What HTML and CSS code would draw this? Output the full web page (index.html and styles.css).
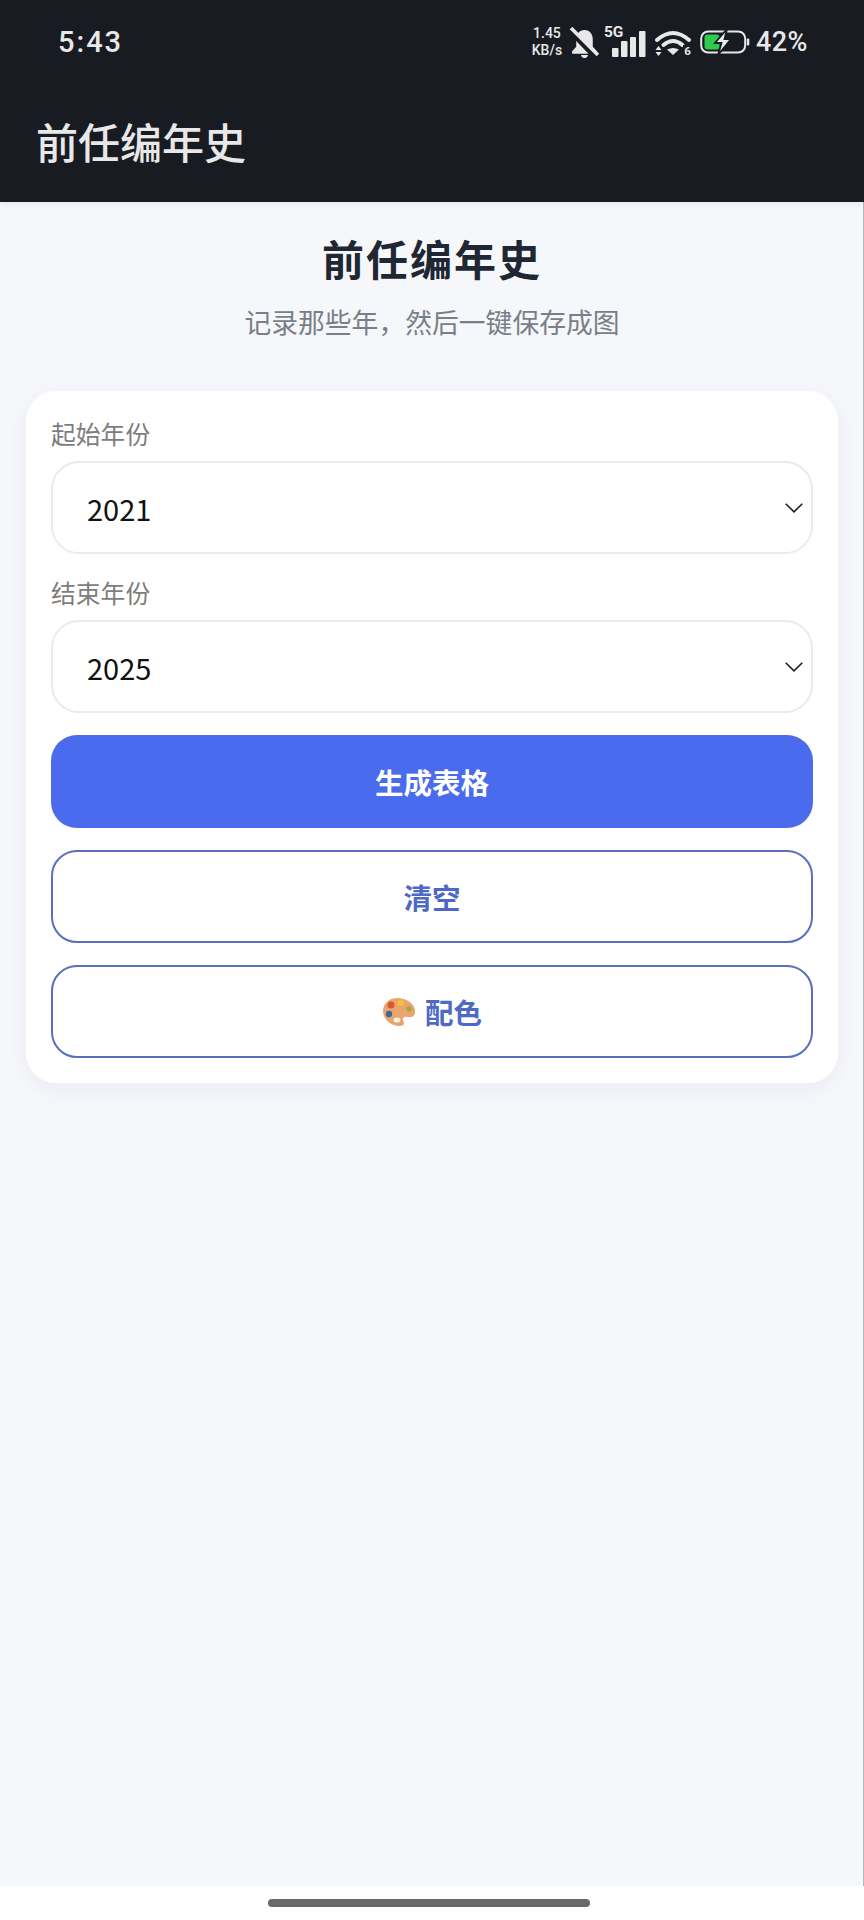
FILE: index.html
```html
<!DOCTYPE html>
<html lang="zh-CN">
<head>
<meta charset="utf-8">
<title>前任编年史</title>
<link rel="stylesheet" href="styles.css">
</head>
<body>
<div class="page">
  <header class="app-header">
    <div class="status-bar">
      <span class="time">5:43</span>
      <div class="status-icons">
        <div class="speed"><span>1.45</span><span>KB/s</span></div>
        <svg class="ic-bell" viewBox="0 0 28 30" width="29" height="31">
          <path d="M14 3C9 3 6 7 6 12V19L2 23.500V26H26V23.500L22 19V12C22 7 19 3 14 3Z" fill="#e8e8e8"/>
          <path d="M10.500 27H17.500C17 29 15.500 30 14 30S11 29 10.500 27Z" fill="#e8e8e8"/>
          <path d="M0 3L25 29" stroke="#181b22" stroke-width="6"/>
          <path d="M1 1L27 27" stroke="#e8e8e8" stroke-width="3.400"/>
        </svg>
        <div class="net">
          <span class="five-g">5G</span>
          <svg viewBox="0 0 34 26" width="34" height="26">
            <rect x="0" y="17" width="6.500" height="9" rx="1" fill="#e8e8e8"/>
            <rect x="9" y="10" width="6.500" height="16" rx="1" fill="#e8e8e8"/>
            <rect x="18" y="6" width="6" height="20" rx="1" fill="#e8e8e8"/>
            <rect x="27" y="0" width="6.500" height="26" rx="1" fill="#e8e8e8"/>
          </svg>
        </div>
        <div class="wifi">
          <svg viewBox="0 0 36 26" width="36" height="26">
            <path d="M2 10Q18 -4 34 10" fill="none" stroke="#e8e8e8" stroke-width="4" stroke-linecap="round"/>
            <path d="M8.500 15Q18 7 27.500 15" fill="none" stroke="#e8e8e8" stroke-width="4" stroke-linecap="round"/>
            <path d="M12 19.500Q18 16.500 24 19.500L18 25Z" fill="#e8e8e8"/>
            <path d="M3.500 16L6.500 20H0.500ZM3.500 26L0.500 22H6.500Z" fill="#e8e8e8"/>
          </svg>
          <span class="wifi-num">6</span>
        </div>
        <svg viewBox="0 0 50 26" width="50" height="26">
          <rect x="1.200" y="2.500" width="44" height="21" rx="7" fill="none" stroke="#e8e8e8" stroke-width="2"/>
          <rect x="4.500" y="5.500" width="15" height="15" rx="3" fill="#2ecb4e"/>
          <rect x="46.800" y="9.500" width="2.500" height="7" rx="1" fill="#e8e8e8"/>
          <path d="M27 0L15 14H21.500L18 26L31 10H24.500Z" fill="#eeeeee" stroke="#181b22" stroke-width="1.800"/>
        </svg>
        <span class="battery-pct">42%</span>
      </div>
    </div>
    <div class="toolbar">前任编年史</div>
  </header>

  <main class="content">
    <h1 class="page-title">前任编年史</h1>
    <p class="page-sub">记录那些年，然后一键保存成图</p>

    <section class="card">
      <label class="field-label">起始年份</label>
      <div class="select">
        <span>2021</span>
        <svg viewBox="0 0 18 10" width="18" height="10"><path d="M0.700 0.700L9 8.800L17.300 0.700" fill="none" stroke="#222" stroke-width="1.600"/></svg>
      </div>
      <label class="field-label second">结束年份</label>
      <div class="select">
        <span>2025</span>
        <svg viewBox="0 0 18 10" width="18" height="10"><path d="M0.700 0.700L9 8.800L17.300 0.700" fill="none" stroke="#222" stroke-width="1.600"/></svg>
      </div>
      <button class="btn btn-primary">生成表格</button>
      <button class="btn btn-outline">清空</button>
      <button class="btn btn-outline">
        <svg class="palette" viewBox="0 0 34 30" width="34" height="30">
          <path d="M15 1C7 1 1 7 1 14C1 21 7 28 16 29C20 29.500 22 28 22 26C22 24 20 23 21 21C22 19 25 20 28 20C32 20 33.500 17 33 13C32 6 24 1 15 1Z" fill="#e9a56b"/>
          <circle cx="9" cy="8" r="3.500" fill="#d8592f"/>
          <circle cx="19" cy="6" r="3" fill="#f0c53c"/>
          <circle cx="27" cy="12" r="2.800" fill="#a8a84a"/>
          <circle cx="7" cy="17" r="3.200" fill="#2f6f9e"/>
          <ellipse cx="15" cy="23" rx="3.500" ry="2.500" fill="#fdf3e6"/>
        </svg>
        <span>配色</span>
      </button>
    </section>
  </main>

  <footer class="nav-bar"><div class="nav-handle"></div></footer>
</div>
</body>
</html>
```
FILE: styles.css
```css
* { box-sizing: border-box; }
html, body { margin: 0; padding: 0; }
body {
  background: #f5f7fb;
  font-family: "Noto Sans CJK SC", "Noto Sans", sans-serif;
}
.page {
  width: 864px;
  height: 1920px;
  display: flex;
  flex-direction: column;
  overflow: hidden;
}
.app-header {
  height: 202px;
  background: #181b22;
  flex: none;
  box-shadow: 0 2px 6px rgba(0, 0, 0, 0.06);
  position: relative;
  color: #e8e8e8;
}
.status-bar {
  height: 84px;
  padding: 0 56px 0 58px;
  display: flex;
  align-items: center;
  justify-content: space-between;
}
.time {
  font-family: Roboto, sans-serif;
  font-size: 29px;
  font-weight: 500;
  letter-spacing: 2px;
}
.status-icons {
  display: flex;
  align-items: center;
  font-family: Roboto, sans-serif;
}
.speed {
  width: 30px;
  display: flex;
  flex-direction: column;
  align-items: center;
  font-size: 14px;
  line-height: 17px;
  font-weight: 500;
  margin-right: 8px;
}
.ic-bell { margin-right: 3px; }
.net {
  width: 44px;
  height: 30px;
  display: flex;
  justify-content: flex-end;
  align-items: flex-end;
  position: relative;
  margin-right: 9px;
}
.five-g {
  position: absolute;
  left: 2px;
  top: -3px;
  font-size: 15.500px;
  line-height: 16px;
  font-weight: 700;
}
.wifi {
  width: 36px;
  height: 26px;
  position: relative;
  margin-right: 9px;
  margin-top: 2px;
}
.wifi svg { display: block; }
.wifi-num {
  position: absolute;
  right: 0;
  bottom: -1px;
  font-size: 11.500px;
  line-height: 12px;
  font-weight: 700;
  background: #181b22;
  padding-left: 1px;
}
.battery-pct {
  font-size: 27px;
  font-weight: 500;
  margin-left: 6px;
  letter-spacing: 0.500px;
}
.toolbar {
  padding-left: 36px;
  font-size: 42px;
  line-height: 60px;
  font-weight: 500;
  margin-top: 27px;
}
.content {
  flex: 1;
  padding: 27px 25px 0 26px;
  border-right: 1px solid #b4b6bb;
}
.page-title {
  margin: 0;
  text-align: center;
  font-size: 42px;
  line-height: 58px;
  font-weight: 700;
  letter-spacing: 2px;
  color: #1f2733;
}
.page-sub {
  margin: 16px 0 0;
  text-align: center;
  font-size: 26.800px;
  line-height: 38px;
  color: #7a7f87;
}
.card {
  margin-top: 50px;
  height: 692px;
  background: #fff;
  border-radius: 30px;
  padding: 24px 25px 25px;
  display: flex;
  flex-direction: column;
  box-shadow: 0 6px 24px rgba(30, 40, 80, 0.05);
}
.field-label {
  font-size: 24.800px;
  line-height: 36px;
  color: #7d7d7d;
}
.field-label.second { margin-top: 20px; }
.select {
  height: 93px;
  margin-top: 10px;
  border: 2px solid #e9ebee;
  border-radius: 28px;
  padding: 1px 8px 0 34px;
  display: flex;
  align-items: center;
  justify-content: space-between;
  font-size: 29px;
  color: #111;
}
.btn {
  height: 93px;
  margin-top: 22px;
  width: 100%;
  border-radius: 26px;
  font-family: inherit;
  font-size: 28.500px;
  font-weight: 700;
  display: flex;
  align-items: center;
  justify-content: center;
  gap: 9px;
  padding: 0;
}
.btn-primary {
  height: 94px;
  background: #4b6bef;
  border: 0;
  color: #fff;
}
.btn-outline {
  background: #fff;
  border: 2.500px solid #5a6fbd;
  color: #4e68c6;
}
.nav-bar {
  height: 34px;
  flex: none;
  background: #fff;
  display: flex;
  justify-content: center;
  padding: 13px 7px 0 0;
}
.nav-handle {
  width: 322px;
  height: 8px;
  border-radius: 4px;
  background: #6a6a6a;
}
```
